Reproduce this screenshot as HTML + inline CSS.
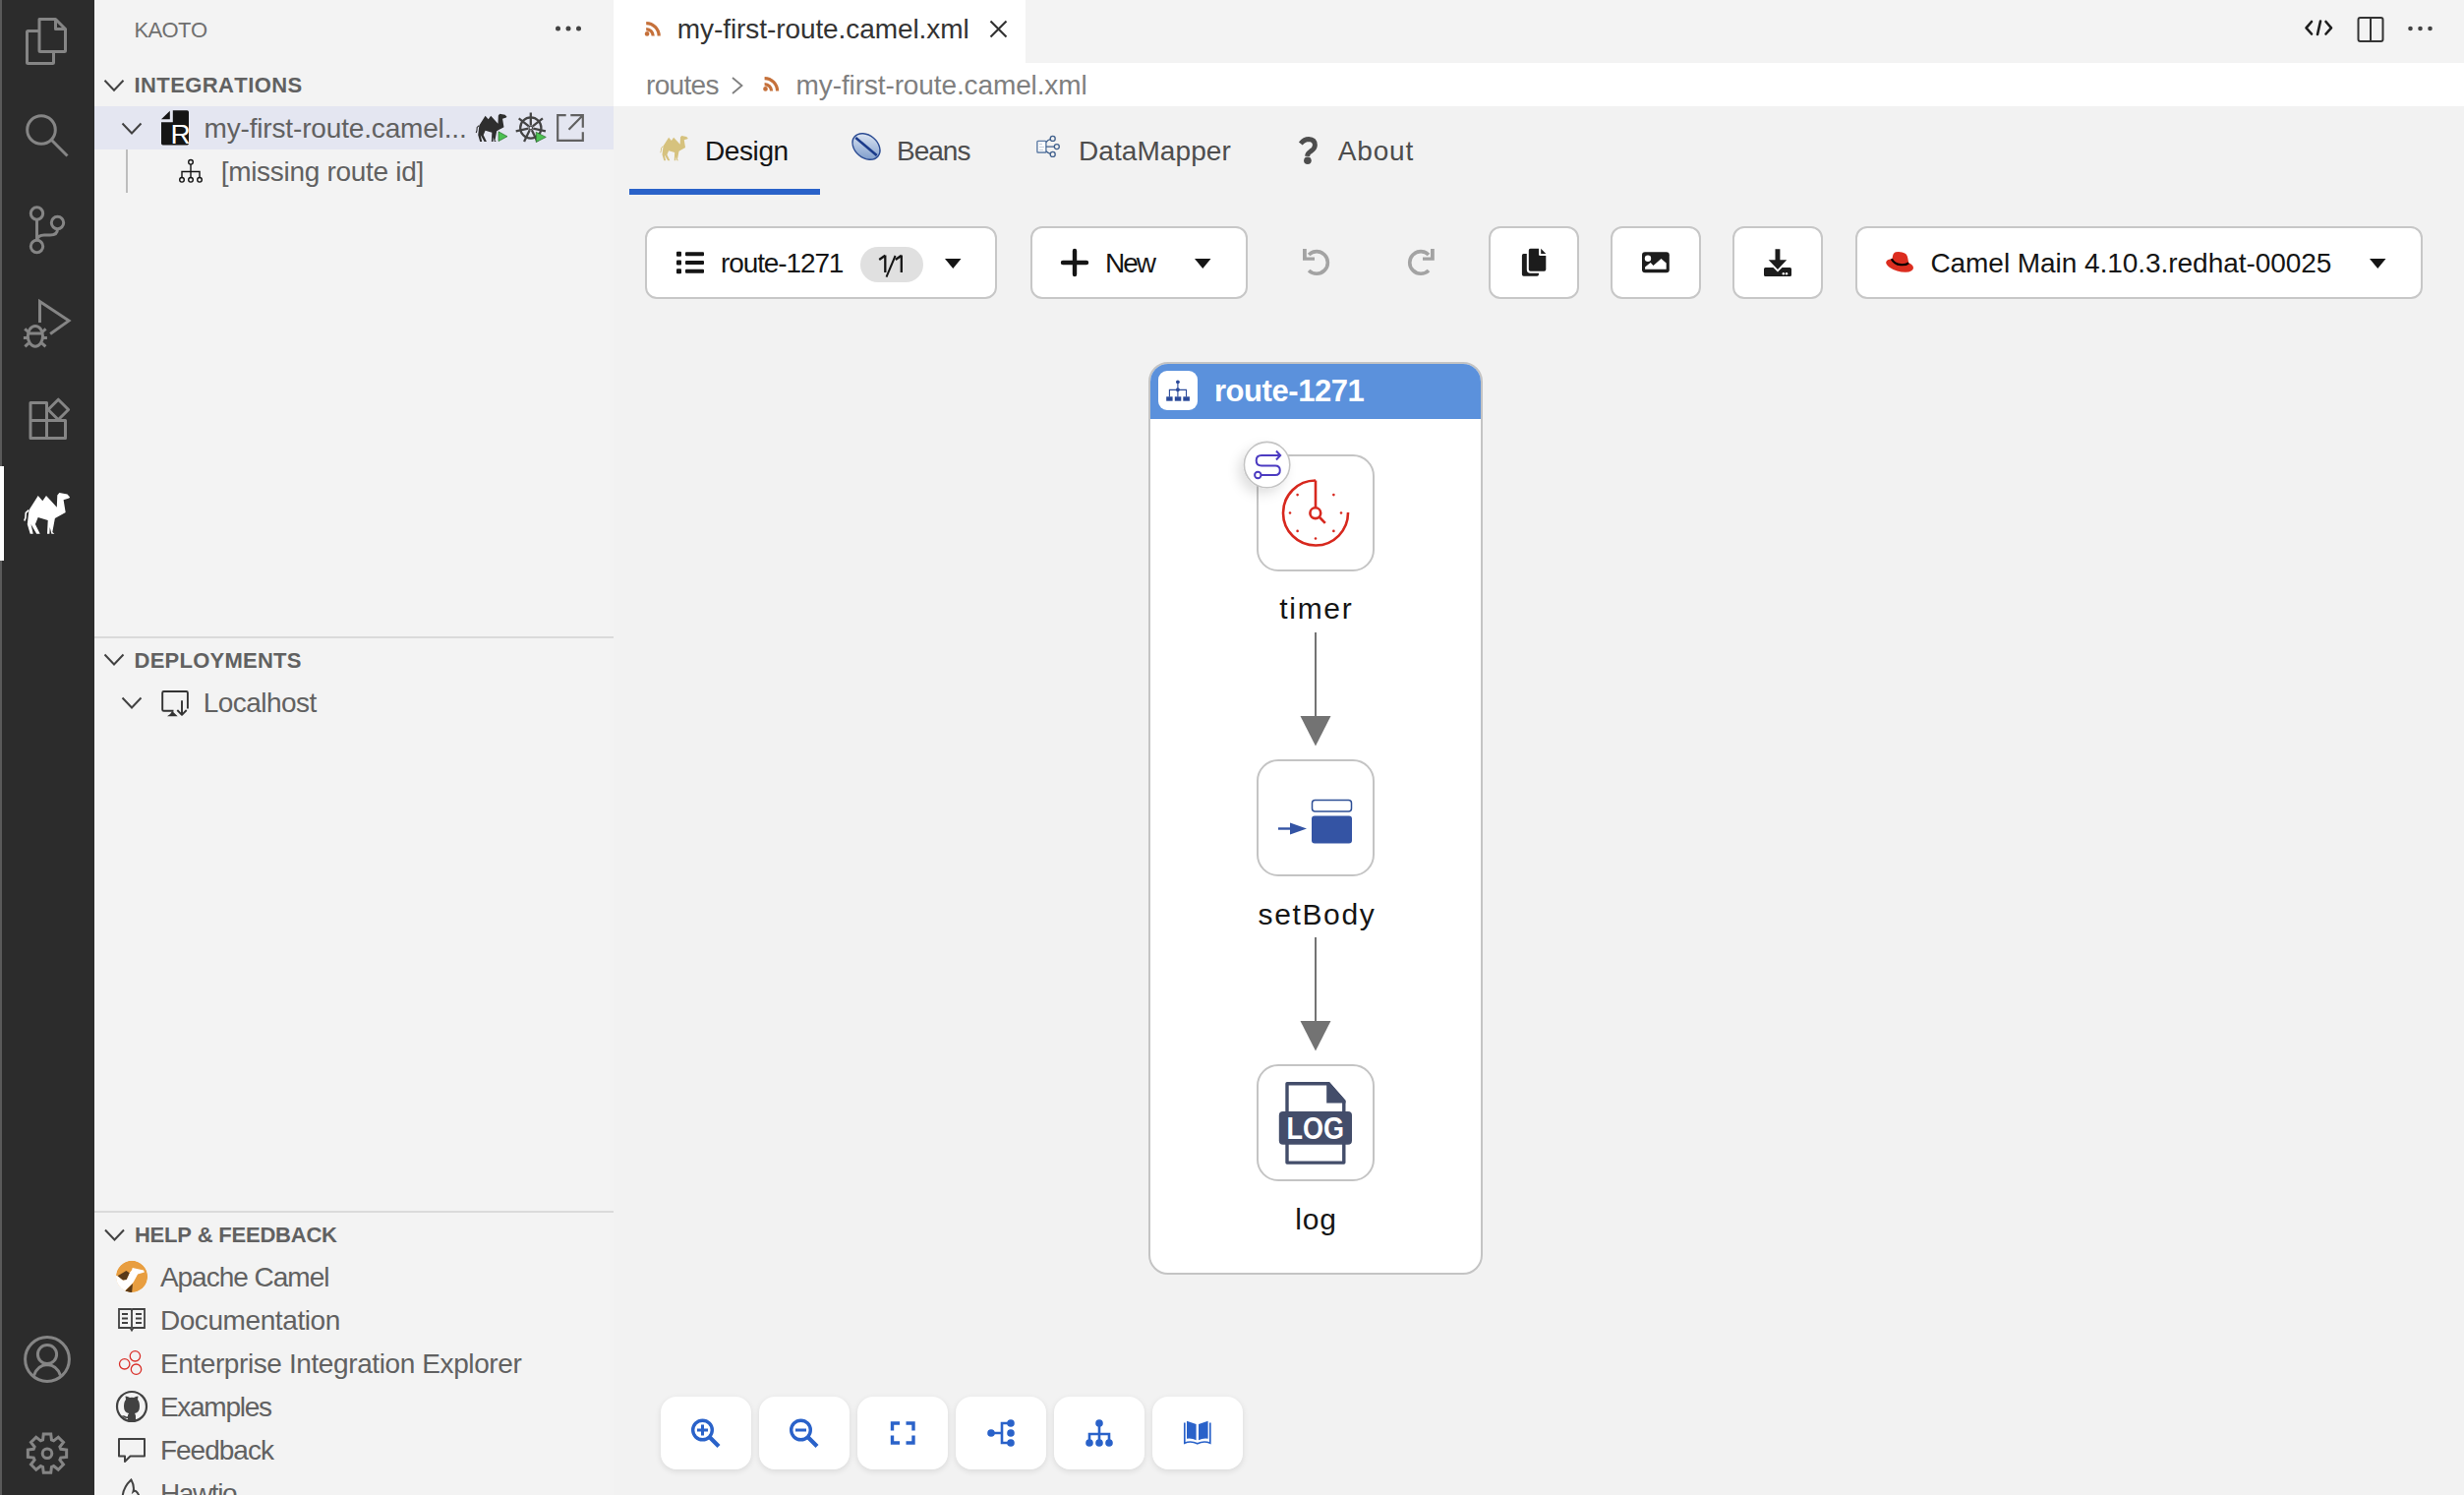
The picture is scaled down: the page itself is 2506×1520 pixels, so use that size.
<!DOCTYPE html><html><head><meta charset="utf-8"><title>Kaoto</title><style>
*{box-sizing:border-box}
html,body{margin:0;padding:0}
body{width:2506px;height:1520px;overflow:hidden;position:relative;background:#f2f2f2;font-family:"Liberation Sans",sans-serif;font-kerning:none}
.t{position:absolute;white-space:nowrap;font-family:"Liberation Sans",sans-serif;font-kerning:none}
.a{position:absolute}
svg{position:absolute;overflow:visible}
</style></head><body>
<div class="a" style="left:0;top:0;width:96px;height:1520px;background:#2c2c2c;border-left:2px solid #5a5a5a"></div>
<div class="a" style="left:0;top:474px;width:4px;height:96px;background:#ffffff"></div>
<div class="a" style="left:96px;top:0;width:528px;height:1520px;background:#f3f3f3"></div>
<div class="a" style="left:96px;top:108px;width:528px;height:44px;background:#e4e6f1"></div>
<div class="a" style="left:96px;top:647px;width:528px;height:2px;background:#dadada"></div>
<div class="a" style="left:96px;top:1231px;width:528px;height:2px;background:#dadada"></div>
<div class="a" style="left:128px;top:152px;width:2px;height:44px;background:#bdbdbd"></div>
<div class="a" style="left:624px;top:0;width:1882px;height:64px;background:#f3f3f3"></div>
<div class="a" style="left:624px;top:0;width:419px;height:64px;background:#ffffff"></div>
<div class="a" style="left:624px;top:64px;width:1882px;height:44px;background:#ffffff"></div>
<div class="a" style="left:624px;top:108px;width:1882px;height:1412px;background:#f2f2f2"></div>
<div class="t" style="left:136.50px;top:19.5px;font-size:22px;line-height:22px;color:#6f6f6f;letter-spacing:-0.625px;">KAOTO</div>
<div class="t" style="left:136.50px;top:76px;font-size:22px;line-height:22px;color:#616161;font-weight:bold;letter-spacing:0.409px;">INTEGRATIONS</div>
<div class="t" style="left:207.50px;top:117px;font-size:28px;line-height:28px;color:#616161;letter-spacing:-0.159px;">my-first-route.camel...</div>
<div class="t" style="left:224.70px;top:161.4px;font-size:28px;line-height:28px;color:#616161;letter-spacing:-0.300px;">[missing route id]</div>
<div class="t" style="left:136.50px;top:661px;font-size:22px;line-height:22px;color:#616161;font-weight:bold;letter-spacing:0.250px;">DEPLOYMENTS</div>
<div class="t" style="left:206.80px;top:701px;font-size:28px;line-height:28px;color:#616161;letter-spacing:-0.550px;">Localhost</div>
<div class="t" style="left:136.90px;top:1245px;font-size:22px;line-height:22px;color:#616161;font-weight:bold;letter-spacing:-0.207px;">HELP &amp; FEEDBACK</div>
<div class="t" style="left:162.90px;top:1285px;font-size:28px;line-height:28px;color:#616161;letter-spacing:-1.009px;">Apache Camel</div>
<div class="t" style="left:162.90px;top:1328.5px;font-size:28px;line-height:28px;color:#616161;letter-spacing:-0.408px;">Documentation</div>
<div class="t" style="left:162.90px;top:1372.6px;font-size:28px;line-height:28px;color:#616161;letter-spacing:-0.397px;">Enterprise Integration Explorer</div>
<div class="t" style="left:162.90px;top:1416.7px;font-size:28px;line-height:28px;color:#616161;letter-spacing:-1.271px;">Examples</div>
<div class="t" style="left:162.90px;top:1461px;font-size:28px;line-height:28px;color:#616161;letter-spacing:-0.986px;">Feedback</div>
<div class="t" style="left:162.90px;top:1505px;font-size:28px;line-height:28px;color:#616161;letter-spacing:-1.380px;">Hawtio</div>
<div class="t" style="left:688.80px;top:16px;font-size:28px;line-height:28px;color:#333333;letter-spacing:-0.078px;">my-first-route.camel.xml</div>
<div class="t" style="left:657.00px;top:72.6px;font-size:28px;line-height:28px;color:#7f7f7f;letter-spacing:-0.660px;">routes</div>
<div class="t" style="left:809.60px;top:72.6px;font-size:28px;line-height:28px;color:#7f7f7f;letter-spacing:-0.113px;">my-first-route.camel.xml</div>
<div class="a" style="left:640px;top:192px;width:194px;height:6px;background:#2a62c9"></div>
<div class="t" style="left:717.00px;top:140px;font-size:28px;line-height:28px;color:#151515;letter-spacing:-0.400px;">Design</div>
<div class="t" style="left:912.00px;top:140px;font-size:28px;line-height:28px;color:#4d4d4d;letter-spacing:-1.000px;">Beans</div>
<div class="t" style="left:1097.00px;top:140px;font-size:28px;line-height:28px;color:#4d4d4d;letter-spacing:0.078px;">DataMapper</div>
<div class="t" style="left:1360.80px;top:140px;font-size:28px;line-height:28px;color:#4d4d4d;letter-spacing:0.800px;">About</div>
<div class="a" style="left:656px;top:230px;width:358px;height:74px;background:#fff;border:2px solid #c7c7c7;border-radius:12px"></div>
<div class="a" style="left:1048px;top:230px;width:221px;height:74px;background:#fff;border:2px solid #c7c7c7;border-radius:12px"></div>
<div class="a" style="left:1514px;top:230px;width:92px;height:74px;background:#fff;border:2px solid #c7c7c7;border-radius:12px"></div>
<div class="a" style="left:1638px;top:230px;width:92px;height:74px;background:#fff;border:2px solid #c7c7c7;border-radius:12px"></div>
<div class="a" style="left:1762px;top:230px;width:92px;height:74px;background:#fff;border:2px solid #c7c7c7;border-radius:12px"></div>
<div class="a" style="left:1887px;top:230px;width:577px;height:74px;background:#fff;border:2px solid #c7c7c7;border-radius:12px"></div>
<div class="a" style="left:875px;top:251px;width:64px;height:36px;background:#e0e0e0;border-radius:18px"></div>
<div class="t" style="left:733.00px;top:254px;font-size:28px;line-height:28px;color:#151515;letter-spacing:-1.111px;">route-1271</div>
<div class="t" style="left:1124.00px;top:254px;font-size:28px;line-height:28px;color:#151515;letter-spacing:-2.000px;">New</div>
<div class="t" style="left:1963.40px;top:254px;font-size:28px;line-height:28px;color:#151515;letter-spacing:-0.048px;">Camel Main 4.10.3.redhat-00025</div>
<div class="a" style="left:1168px;top:368px;width:340px;height:928px;background:#fff;border:2px solid #c4c4c4;border-radius:20px;overflow:hidden"><div class="a" style="left:0;top:0;width:340px;height:56px;background:#5b91dc"></div></div>
<div class="a" style="left:1178px;top:377px;width:40px;height:40px;background:#fff;border-radius:9px"></div>
<div class="t" style="left:1235.00px;top:382px;font-size:31px;line-height:31px;color:#ffffff;font-weight:bold;letter-spacing:-0.444px;">route-1271</div>
<div class="a" style="left:1278px;top:462px;width:120px;height:119px;background:#fff;border:2px solid #c4c4c4;border-radius:22px"></div>
<div class="a" style="left:1278px;top:772px;width:120px;height:119px;background:#fff;border:2px solid #c4c4c4;border-radius:22px"></div>
<div class="a" style="left:1278px;top:1082px;width:120px;height:119px;background:#fff;border:2px solid #c4c4c4;border-radius:22px"></div>
<div class="t" style="left:1301.30px;top:604px;font-size:30px;line-height:30px;color:#151515;letter-spacing:1.675px;">timer</div>
<div class="t" style="left:1279.50px;top:915px;font-size:30px;line-height:30px;color:#151515;letter-spacing:1.633px;">setBody</div>
<div class="t" style="left:1317.30px;top:1225px;font-size:30px;line-height:30px;color:#151515;letter-spacing:0.850px;">log</div>
<div class="a" style="left:672px;top:1420px;width:92px;height:74px;background:#fff;border-radius:16px;box-shadow:0 2px 6px rgba(0,0,0,0.10)"></div>
<div class="a" style="left:772px;top:1420px;width:92px;height:74px;background:#fff;border-radius:16px;box-shadow:0 2px 6px rgba(0,0,0,0.10)"></div>
<div class="a" style="left:872px;top:1420px;width:92px;height:74px;background:#fff;border-radius:16px;box-shadow:0 2px 6px rgba(0,0,0,0.10)"></div>
<div class="a" style="left:972px;top:1420px;width:92px;height:74px;background:#fff;border-radius:16px;box-shadow:0 2px 6px rgba(0,0,0,0.10)"></div>
<div class="a" style="left:1072px;top:1420px;width:92px;height:74px;background:#fff;border-radius:16px;box-shadow:0 2px 6px rgba(0,0,0,0.10)"></div>
<div class="a" style="left:1172px;top:1420px;width:92px;height:74px;background:#fff;border-radius:16px;box-shadow:0 2px 6px rgba(0,0,0,0.10)"></div>
<svg style="left:0;top:0" width="2506" height="1520" viewBox="0 0 2506 1520"><g fill="none" stroke="#858585" stroke-width="3" stroke-linejoin="round"><path d="M40 19.5H56.5L66.5 29.5V51.5Q66.5 52.5 65.5 52.5H41Q40 52.5 40 51.5Z"/><path d="M56.5 19.5V29.5H66.5"/><path d="M40 31.5H28.5Q27.5 31.5 27.5 32.5V63.5Q27.5 64.5 28.5 64.5H53.5Q54.5 64.5 54.5 63.5V52.5"/><circle cx="42" cy="132" r="14.3"/><path d="M52.3 142.3L68.5 158.5" stroke-linecap="butt"/><circle cx="37.5" cy="217" r="6.2"/><circle cx="58.5" cy="226.5" r="6.2"/><circle cx="37.5" cy="250.5" r="6.2"/><path d="M37.5 223.2V244.3"/><path d="M58.5 232.7Q58.5 239 51 239H45Q38.5 239 37.5 244"/><path d="M40.5 328V306.5L70 326.1L51.1 339.5" stroke-linejoin="miter"/><ellipse cx="35.9" cy="341.8" rx="7.6" ry="10.4"/><path d="M28.5 339.1H43.3M23.9 343.5H28.3M43.5 343.5H47.9M25.2 334.3L29 337.6M46.6 334.3L42.8 337.6M25.4 352.4L29.2 348.8M46.4 352.4L42.6 348.8"/><path d="M31 409.5H47.5V445.5H31ZM31 427.5H66.5V445.5H47.5"/><path d="M59.3 406.2L69.6 416.5L59.3 426.8L49 416.5Z"/><circle cx="48" cy="1382" r="22.4"/><circle cx="48" cy="1377" r="9.6"/><path d="M34.5 1398.5Q38 1388 48 1387.5Q58 1388 61.5 1398.5"/><path stroke-linejoin="miter" d="M43.57 1463.89 L44.27 1458.05 L51.73 1458.05 L52.43 1463.89 L54.63 1464.81 L59.26 1461.17 L64.53 1466.44 L60.89 1471.07 L61.81 1473.27 L67.65 1473.97 L67.65 1481.43 L61.81 1482.13 L60.89 1484.33 L64.53 1488.96 L59.26 1494.23 L54.63 1490.59 L52.43 1491.51 L51.73 1497.35 L44.27 1497.35 L43.57 1491.51 L41.37 1490.59 L36.74 1494.23 L31.47 1488.96 L35.11 1484.33 L34.19 1482.13 L28.35 1481.43 L28.35 1473.97 L34.19 1473.27 L35.11 1471.07 L31.47 1466.44 L36.74 1461.17 L41.37 1464.81Z"/><circle cx="48" cy="1477.7" r="4.8"/></g><g transform="translate(24.8 501.1) scale(1.0)"><path fill="#ffffff" d="M5.2 16.7 L13.9 3.0 L18.5 8.2 L22.2 2.8 L33.0 14.6 L33.5 2.4 L35.6 0.0 L43.7 1.5 L46.3 4.3 L45.4 5.4 L39.8 7.2 L41.9 19.8 L31.1 25.9 L28.5 39.8 L30.6 41.7 L27.6 41.7 L25.9 35.0 L25.6 41.7 L23.2 41.7 L23.9 28.0 L13.9 25.0 L11.1 31.9 L15.9 41.7 L12.4 41.7 L6.7 31.9 L8.9 41.7 L5.9 41.7 L3.0 31.9 L4.5 18.9Z"/><path fill="none" stroke="#ffffff" stroke-width="1.6" d="M4.5 17.6L1.5 20.2L1.1 25.4L0 28.5"/></g><g fill="none" stroke="#424242" stroke-width="2" stroke-linecap="butt" stroke-linejoin="miter"><path d="M106.5 81.8L116.0 91.8L125.5 81.8"/><path d="M124.5 125.5L134.0 135.5L143.5 125.5"/><path d="M106.5 665.5L116.0 675.5L125.5 665.5"/><path d="M124.5 709.5L134.0 719.5L143.5 709.5"/><path d="M107 1250.5L116.5 1260.5L126 1250.5"/></g><g fill="#424242"><circle cx="567.5" cy="29" r="2.5"/><circle cx="578" cy="29" r="2.5"/><circle cx="588.5" cy="29" r="2.5"/></g><path fill="#151515" d="M175.8 112.3H190.3Q192 112.3 192 114V145.8Q192 147.5 190.3 147.5H165.7Q164 147.5 164 145.8V124.3H175.8Z"/><path fill="#151515" d="M164 121.3L172.8 112.8V121.3Z"/><text x="173.6" y="146" font-family="Liberation Sans" font-size="28" fill="#fff">R</text><g transform="translate(484.2 115.8) scale(0.675)"><path fill="#2e2e2e" d="M5.2 16.7 L13.9 3.0 L18.5 8.2 L22.2 2.8 L33.0 14.6 L33.5 2.4 L35.6 0.0 L43.7 1.5 L46.3 4.3 L45.4 5.4 L39.8 7.2 L41.9 19.8 L31.1 25.9 L28.5 39.8 L30.6 41.7 L27.6 41.7 L25.9 35.0 L25.6 41.7 L23.2 41.7 L23.9 28.0 L13.9 25.0 L11.1 31.9 L15.9 41.7 L12.4 41.7 L6.7 31.9 L8.9 41.7 L5.9 41.7 L3.0 31.9 L4.5 18.9Z"/><path fill="none" stroke="#2e2e2e" stroke-width="1.6" d="M4.5 17.6L1.5 20.2L1.1 25.4L0 28.5"/></g><path fill="#4cc151" stroke="#1e5a20" stroke-width="0.6" d="M507 133.8L516 138.7L507 143.6Z"/><g stroke="#444" fill="none" stroke-width="2.3"><circle cx="539.8" cy="130" r="10.6"/><circle cx="539.8" cy="130" r="2.4" fill="#444" stroke="none"/><circle cx="539.8" cy="130" r="1.2" fill="#e4e6f1" stroke="none"/><path d="M539.80 127.50L539.80 114.50"/><path d="M541.75 128.44L551.92 120.34"/><path d="M542.24 130.56L554.91 133.45"/><path d="M540.88 132.25L546.53 143.97"/><path d="M538.72 132.25L533.07 143.97"/><path d="M537.36 130.56L524.69 133.45"/><path d="M537.85 128.44L527.68 120.34"/></g><path fill="#4cc151" stroke="#1e5a20" stroke-width="0.6" d="M545.2 134.2L555.3 139.4L545.2 144.6Z"/><g stroke="#616161" fill="none" stroke-width="2.2"><path d="M575.7 117.2H567.2V142.8H592.8V134.3M592.8 129.7V117.2H580.3M592 118L578.5 131.7"/></g><g stroke="#151515" fill="none" stroke-width="1.4"><circle cx="194" cy="164.8" r="2.3"/><circle cx="185" cy="182.8" r="2.3"/><circle cx="194" cy="182.8" r="2.3"/><circle cx="203" cy="182.8" r="2.3"/><path d="M194 167.1V180.5M185 180.5V174.5H203V180.5"/></g><g stroke="#333" fill="none" stroke-width="1.9" stroke-linejoin="round"><path d="M176.5 722.8H166.6Q165.2 722.8 165.2 721.4V704.4Q165.2 703 166.6 703H189.5Q190.9 703 190.9 704.4V720.6"/><path d="M185 712.2V726.5M180.3 722L185 726.8L189.7 722"/></g><path fill="#333" d="M175.2 723L180.7 728.3H170Q173 727.2 175.2 723Z"/><defs><clipPath id="cc"><circle cx="134.05" cy="1297.9" r="16.05"/></clipPath></defs><g clip-path="url(#cc)"><circle cx="134.05" cy="1297.9" r="16.05" fill="#e89e40"/><path fill="#ffffff" d="M134.7 1288.9L146.1 1291.4L146.9 1293.4L140.1 1295.5L136.2 1302.7L134.7 1305.1L126.9 1312.5L115 1316L115 1296.5L119.6 1297.3L125 1301.5L128.7 1300.9L131.7 1294.3L134.1 1291.3Z"/><path fill="#5a3a18" d="M119.6 1297.3L128.4 1291.9L131.7 1294.3L128.7 1300.9L125 1301.5Z"/><path fill="#5a3a18" d="M135 1305.1L134.1 1314.5L127.2 1312.7Z"/></g><g fill="none" stroke="#424242" stroke-width="1.8"><path d="M121 1331H133L134 1332L135 1331H147V1350H135.5L134 1352.5L132.5 1350H121Z"/><path d="M134 1332V1350M124 1336H130M124 1340.5H130M124 1345H130M138 1336H144M138 1340.5H144M138 1345H144"/></g><g fill="none" stroke="#d9302a" stroke-width="1.3"><circle cx="137.4" cy="1378.8" r="5.2"/><circle cx="126.7" cy="1386.8" r="5.2"/><circle cx="138.5" cy="1392.2" r="5.2"/></g><circle cx="134" cy="1430" r="15" fill="none" stroke="#424242" stroke-width="2.2"/><path fill="#424242" d="M126 1430Q126 1425 128 1423L127.5 1419.5Q130 1419.5 132 1421Q134 1420.5 136 1421Q138 1419.5 140.5 1419.5L140 1423Q142 1425 142 1430Q142 1436 137 1437Q138 1438.5 138 1440V1445H130V1442Q126 1442.5 124 1439L127 1439.5Q129 1441 130 1440V1438.5Q131 1437.5 131 1437Q126 1436 126 1430Z"/><path fill="none" stroke="#424242" stroke-width="2" stroke-linejoin="round" d="M121 1463H147V1480.5H132.5L127 1486V1480.5H121Z"/><path fill="none" stroke="#424242" stroke-width="2" d="M124.7 1521Q125.5 1512 133.4 1504.5Q137 1511 135.5 1516.5Q138.5 1514 141.5 1521"/><g fill="none" stroke="#c5703a" stroke-width="3.2" stroke-linecap="butt"><path d="M657.2 23.6A13 13 0 0 1 670.2 36.6"/><path d="M657.2 29.6A7 7 0 0 1 664.2 36.6"/></g><circle cx="658.1" cy="34.4" r="2.3" fill="#c5703a"/><g fill="none" stroke="#c5703a" stroke-width="3.2" stroke-linecap="butt"><path d="M777.6 79.6A13 13 0 0 1 790.6 92.6"/><path d="M777.6 85.6A7 7 0 0 1 784.6 92.6"/></g><circle cx="778.5" cy="90.4" r="2.3" fill="#c5703a"/><path fill="none" stroke="#333" stroke-width="2.2" d="M1007.5 21.5L1023.5 37.5M1023.5 21.5L1007.5 37.5"/><path fill="none" stroke="#7f7f7f" stroke-width="1.8" d="M745 79L754.5 87L745 95"/><g fill="none" stroke="#1e1e1e" stroke-width="2.6" stroke-linecap="round" stroke-linejoin="round"><path d="M2351 22L2345.5 28.3L2351 34.5M2365.5 22L2371 28.3L2365.5 34.5M2360 21.5L2357 35"/></g><g fill="none" stroke="#333" stroke-width="2"><rect x="2398.5" y="18" width="25" height="24" rx="2"/><path d="M2411 18V42"/></g><g fill="#424242"><circle cx="2451.5" cy="29" r="2.3"/><circle cx="2461.5" cy="29" r="2.3"/><circle cx="2471.5" cy="29" r="2.3"/></g><g transform="translate(671.7 138) scale(0.605)"><path fill="#d6c27e" d="M5.2 16.7 L13.9 3.0 L18.5 8.2 L22.2 2.8 L33.0 14.6 L33.5 2.4 L35.6 0.0 L43.7 1.5 L46.3 4.3 L45.4 5.4 L39.8 7.2 L41.9 19.8 L31.1 25.9 L28.5 39.8 L30.6 41.7 L27.6 41.7 L25.9 35.0 L25.6 41.7 L23.2 41.7 L23.9 28.0 L13.9 25.0 L11.1 31.9 L15.9 41.7 L12.4 41.7 L6.7 31.9 L8.9 41.7 L5.9 41.7 L3.0 31.9 L4.5 18.9Z"/><path fill="none" stroke="#d6c27e" stroke-width="1.6" d="M4.5 17.6L1.5 20.2L1.1 25.4L0 28.5"/></g><defs><linearGradient id="bg" x1="0" y1="0" x2="1" y2="1"><stop offset="0" stop-color="#eef3fa"/><stop offset="1" stop-color="#6d8fc4"/></linearGradient></defs><g transform="translate(881 149) rotate(40)"><ellipse cx="0" cy="0" rx="15.5" ry="11.5" fill="url(#bg)" stroke="#2a4a92" stroke-width="1.4"/><path d="M-14 0H14" stroke="#1a3a8a" stroke-width="2.5"/></g><rect x="1054.9" y="143.4" width="9" height="11.6" rx="0.8" fill="#fff" stroke="#5b7aa3" stroke-width="1.4"/><g fill="none" stroke="#3f5f8c" stroke-width="1.3"><path d="M1063.9 144.5Q1066 142 1068.4 141.6M1063.9 149.1H1072.3M1063.9 153.8Q1066 155.8 1068.4 156.3"/><circle cx="1070.7" cy="140.9" r="2.5"/><circle cx="1074.8" cy="149.1" r="2.5"/><circle cx="1070.7" cy="156.9" r="2.5"/></g><path stroke="#b8c4d4" stroke-width="0.8" d="M1057 146.5H1060M1057 149.5H1062M1057 152.5H1061"/><path fill="none" stroke="#4d4d4d" stroke-width="4.9" d="M1322.8 146Q1326.5 141.5 1331 141.5Q1337.3 141.8 1337.4 147.5Q1337.3 151.5 1332.8 154Q1329.7 156 1329.6 158.8"/><circle cx="1329.9" cy="163.2" r="3.8" fill="#4d4d4d"/><g fill="#151515"><rect x="688" y="255.7" width="5" height="5" rx="1"/><rect x="697" y="256.2" width="19" height="4" rx="1"/><rect x="688" y="264.5" width="5" height="5" rx="1"/><rect x="697" y="265.0" width="19" height="4" rx="1"/><rect x="688" y="273.2" width="5" height="5" rx="1"/><rect x="697" y="273.7" width="19" height="4" rx="1"/></g><g fill="none" stroke="#151515" stroke-width="2.3"><path d="M900.3 259.5V277M894.2 264L900.3 259.8M916.8 259.5V277M910.8 264L916.8 259.8"/><path stroke-width="2" d="M901.5 281.6L910.6 260"/></g><path fill="#151515" d="M961 263H977.5L969.25 273Z"/><path fill="#151515" d="M1215 263H1231.5L1223.25 273Z"/><path fill="#151515" d="M2410 263H2426.5L2418.25 273Z"/><path fill="none" stroke="#151515" stroke-width="4.4" stroke-linecap="round" d="M1093 255V279M1081 267H1105"/><g fill="none" stroke="#a3a3a3" stroke-width="3.6"><path d="M1331.1 258.9A11.3 11.3 0 1 1 1331.1 274.9"/><path d="M1453 258.9A11.3 11.3 0 1 0 1453 274.9"/></g><path fill="#a3a3a3" d="M1325 253H1328.8V261.4H1337V264.8H1325Z"/><path fill="#a3a3a3" d="M1458.8 253H1455V261.4H1447V264.8H1458.8Z"/><path fill="#1c1c1c" d="M1556.5 252.8H1565V258.5Q1565 260 1566.5 260H1572.3V274Q1572.3 275.7 1570.6 275.7H1556.5Q1554.8 275.7 1554.8 274V254.5Q1554.8 252.8 1556.5 252.8Z"/><path fill="#1c1c1c" d="M1567.2 252.8L1572.3 258H1567.2Z"/><path fill="#1c1c1c" d="M1549.6 258H1552.8V274Q1552.8 277.8 1556.5 277.8H1565V279.1Q1565 280.8 1563.3 280.8H1549.6Q1547.9 280.8 1547.9 279.1V259.7Q1547.9 258 1549.6 258Z"/><rect x="1670" y="256.3" width="27.8" height="20.9" rx="3" fill="#1c1c1c"/><circle cx="1676" cy="262.7" r="3.2" fill="#fff"/><path fill="#fff" d="M1673.1 273.8V271.6L1678.7 267.1L1681.5 269.9L1689.5 263L1694.7 267.4V273.8Z"/><path fill="#1c1c1c" d="M1805.5 253.3H1810.4V264.3H1817.2L1808 274L1798.7 264.3H1805.5Z"/><path fill="#1c1c1c" d="M1795.5 272H1803.5L1808 276.5L1812.5 272H1820.5Q1822 272 1822 273.5V279.4Q1822 280.9 1820.5 280.9H1795.5Q1794 280.9 1794 279.4V273.5Q1794 272 1795.5 272Z"/><circle cx="1813.8" cy="278.2" r="1.2" fill="#fff"/><circle cx="1817" cy="278.2" r="1.2" fill="#fff"/><path fill="#dc2d1f" d="M1924.5 263Q1925 257 1928 256.2Q1931.5 255.6 1934.5 256.4Q1939.5 257.2 1940.2 262L1941.2 267.3Q1945.8 269 1946 272.5Q1945.5 276.5 1938 276.8Q1929 276.8 1922 272Q1917.8 268.8 1918.2 266.5Q1919 263.8 1923.5 263.3Z"/><path fill="none" stroke="#000" stroke-width="2.2" d="M1923.8 263.2Q1926.5 268.6 1933 269.2Q1938.5 269.6 1941.2 267.3"/><g fill="#2b4a9a" stroke="#2b4a9a"><circle cx="1197.9" cy="388.3" r="1.9" stroke="none"/><path fill="none" stroke-width="1.1" d="M1197.9 390V403.5M1189.4 403.5V396.4H1206.5V403.5"/><circle cx="1197.9" cy="396.3" r="2" stroke="none"/><rect x="1186.2" y="403.3" width="6.4" height="4.4" stroke="none"/><rect x="1194.8" y="403.3" width="6.5" height="4.4" stroke="none"/><rect x="1203.3" y="403.3" width="6.6" height="4.4" stroke="none"/></g><g fill="none" stroke="#d7281e" stroke-width="2.6"><path d="M1338 488.5A33 33 0 1 0 1371 521" stroke-width="2.6"/><path d="M1338 488.5V516"/><circle cx="1337.8" cy="521.7" r="5.4"/><path d="M1341.6 525.5L1347.8 531.8"/></g><g fill="#d7281e"><circle cx="1364.00" cy="521.50" r="1.3"/><circle cx="1356.38" cy="539.88" r="1.3"/><circle cx="1338.00" cy="547.50" r="1.3"/><circle cx="1319.62" cy="539.88" r="1.3"/><circle cx="1312.00" cy="521.50" r="1.3"/><circle cx="1319.62" cy="503.12" r="1.3"/><circle cx="1356.38" cy="503.12" r="1.3"/></g><defs><filter id="sh" x="-80%" y="-80%" width="260%" height="260%"><feDropShadow dx="-5" dy="6" stdDeviation="6" flood-color="#000" flood-opacity="0.12"/></filter></defs><circle cx="1288.6" cy="472.6" r="23.2" fill="#fff" stroke="#c4c4c4" stroke-width="1.6" filter="url(#sh)"/><g fill="none" stroke="#4c3bc1" stroke-width="2"><path d="M1301 463H1283Q1277.7 463 1277.7 468.25Q1277.7 473.5 1283 473.5H1297Q1301.75 473.5 1301.75 478.25Q1301.75 483 1297 483H1282.6"/><path d="M1298 458.5L1302.2 463L1298 467.5"/><circle cx="1279.3" cy="483" r="3.2"/></g><g stroke="#737373" stroke-width="2" fill="none"><path d="M1338 643V728M1338 953V1038"/></g><g fill="#737373"><path d="M1322.5 728H1353.5L1338 758.5Z"/><path d="M1322.5 1038H1353.5L1338 1068.5Z"/></g><rect x="1334.5" y="813.5" width="40" height="11.5" rx="3" fill="none" stroke="#2e4f96" stroke-width="1.5"/><rect x="1334" y="829.5" width="41" height="28" rx="3" fill="#3454a4"/><path fill="none" stroke="#3454a4" stroke-width="2.4" d="M1300 842.5H1313"/><path fill="#3454a4" d="M1312 836.5L1329 842.5L1312 848.5Z"/><path fill="none" stroke="#434d6a" stroke-width="3.4" stroke-linejoin="round" d="M1309 1101.7H1351L1366.8 1119.5V1182.1H1309Z"/><path fill="#434d6a" d="M1349.2 1100H1352L1368.5 1119V1121.5H1349.2Z"/><rect x="1300.8" y="1130" width="74.2" height="33.8" rx="4" fill="#434d6a"/><text x="1308.5" y="1157.7" font-family="Liberation Sans" font-weight="bold" font-size="31.5" fill="#fff" textLength="58.5" lengthAdjust="spacingAndGlyphs">LOG</text><g fill="none" stroke="#2a62c9" stroke-width="3.4"><circle cx="714.5" cy="1454" r="9.8"/><path d="M721.5 1461L731 1470.5" stroke-width="4.2"/><path d="M709 1454H720M714.5 1448.5V1459.5" stroke-width="3"/><circle cx="814.5" cy="1454" r="9.8"/><path d="M821.5 1461L831 1470.5" stroke-width="4.2"/><path d="M809 1454H820" stroke-width="3"/><path stroke-linejoin="miter" d="M907.5 1454.5V1447H915M921.5 1447H929V1454.5M907.5 1459.5V1467H915M921.5 1467H929V1459.5"/></g><g fill="#2a62c9" stroke="#2a62c9"><circle cx="1008" cy="1457" r="3.8" stroke="none"/><circle cx="1028" cy="1447" r="3.8" stroke="none"/><circle cx="1028" cy="1457" r="3.8" stroke="none"/><circle cx="1028" cy="1467" r="3.8" stroke="none"/><path fill="none" stroke-width="2.6" d="M1008 1457H1019M1028 1447H1019V1467H1028"/><circle cx="1118" cy="1447" r="3.8" stroke="none"/><circle cx="1108" cy="1467" r="3.8" stroke="none"/><circle cx="1118" cy="1467" r="3.8" stroke="none"/><circle cx="1128" cy="1467" r="3.8" stroke="none"/><path fill="none" stroke-width="2.6" d="M1118 1447V1467M1108 1467V1458H1128V1467"/></g><path fill="#2a62c9" d="M1207 1444.8L1216.6 1448V1464.3Q1212 1462 1207 1462.8Z"/><path fill="#2a62c9" d="M1228.6 1444.8L1219 1448V1464.3Q1223.5 1462 1228.6 1462.8Z"/><path fill="none" stroke="#2a62c9" stroke-width="1.7" d="M1204.8 1446.5V1467.3Q1211 1464.5 1217.8 1467.8Q1224.5 1464.5 1230.8 1467.3V1446.5"/></svg>
</body></html>
